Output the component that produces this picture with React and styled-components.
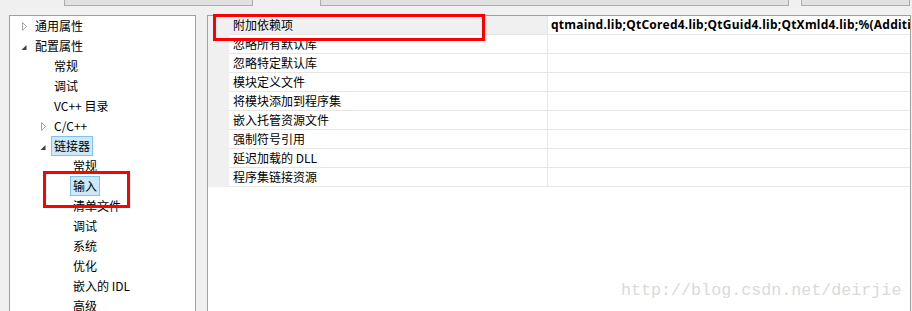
import React from 'react'
import styled, { createGlobalStyle } from 'styled-components'

const GlobalStyle = createGlobalStyle`
html, body {
    margin: 0;
    padding: 0;
    background: #f0f0f0;
    overflow: hidden;
}
body {
    font-family: "Noto Sans CJK SC", "Noto Sans", sans-serif;
    font-size: 12px;
    color: #000;
}
`

const Page = styled.div`
position: relative;
width: 912px;
height: 311px;
overflow: hidden;
background: #f0f0f0;
`

const Strip = styled.div`
display: flex;
height: 6px;
padding-left: 64px;
`

const StripButton = styled.div`
box-sizing: border-box;
width: ${p => p.$width}px;
margin-left: ${p => p.$gap || 0}px;
height: 6px;
background: #e1e1e1;
border: 1px solid #adadad;
border-top: none;
`

const Panels = styled.div`
display: flex;
gap: 11px;
margin-top: 9px;
padding-left: 9px;
`

const TreePanel = styled.div`
box-sizing: border-box;
width: 187px;
height: 320px;
background: #fff;
border: 1px solid #a0a0a0;
`

const TreeRow = styled.div`
display: flex;
align-items: center;
height: 20px;
padding-left: ${p => 9 + p.$level * 19}px;
white-space: nowrap;
`

const Expander = styled.span`
display: flex;
width: 10px;
height: 20px;
margin-right: 3px;
`

const TreeLabel = styled.span`
box-sizing: border-box;
height: 20px;
line-height: 18px;
padding: 0 2px;
border: 1px solid ${p => p.$sel ? '#7ec4ef' : 'transparent'};
background: ${p => p.$sel ? '#cde8f8' : 'transparent'};
`

const GridPanel = styled.div`
box-sizing: border-box;
width: 704px;
height: 320px;
background: #fff;
border: 1px solid #a0a0a0;
overflow: hidden;
`

const GridRow = styled.div`
display: grid;
grid-template-columns: 21px 319px 1fr;
height: 19px;
`

const Gutter = styled.div`
background: #f0f0f0;
`

const NameCell = styled.div`
box-sizing: border-box;
padding-left: 4px;
line-height: 18px;
border-right: 1px solid #e6e6e6;
border-bottom: 1px solid #e6e6e6;
background: ${p => p.$sel ? '#f0f0f0' : '#fff'};
white-space: nowrap;
`

const ValueCell = styled.div`
box-sizing: border-box;
padding-left: 3px;
line-height: 18px;
border-bottom: 1px solid #e6e6e6;
font-family: "Noto Sans", sans-serif;
font-weight: 700;
letter-spacing: 0.25px;
white-space: nowrap;
overflow: hidden;
`

const Mark = styled.div`
position: absolute;
box-sizing: border-box;
left: ${p => p.$x}px;
top: ${p => p.$y}px;
width: ${p => p.$w}px;
height: ${p => p.$h}px;
border: 3px solid #ff0000;
pointer-events: none;
`

const Watermark = styled.div`
position: absolute;
left: 621px;
top: 281px;
font-family: "Liberation Mono", monospace;
font-size: 16.7px;
color: #dadada;
white-space: nowrap;
`

const Collapsed = () => (
    <svg width="10" height="20" viewBox="0 0 10 20">
        <polygon points="3.5,6.5 7.5,10.5 3.5,14.5" fill="none" stroke="#a6a6a6" strokeWidth="1" />
    </svg>
)

const Expanded = () => (
    <svg width="10" height="20" viewBox="0 0 10 20">
        <polygon points="7.5,9 7.5,14 2.5,14" fill="#404040" />
    </svg>
)

const tree = [
    { text: '通用属性', level: 0, icon: 'closed' },
    { text: '配置属性', level: 0, icon: 'open' },
    { text: '常规', level: 1 },
    { text: '调试', level: 1 },
    { text: 'VC++ 目录', level: 1 },
    { text: 'C/C++', level: 1, icon: 'closed' },
    { text: '链接器', level: 1, icon: 'open', sel: true },
    { text: '常规', level: 2 },
    { text: '输入', level: 2, sel: true },
    { text: '清单文件', level: 2 },
    { text: '调试', level: 2 },
    { text: '系统', level: 2 },
    { text: '优化', level: 2 },
    { text: '嵌入的 IDL', level: 2 },
    { text: '高级', level: 2 },
]

const props = [
    { name: '附加依赖项', value: 'qtmaind.lib;QtCored4.lib;QtGuid4.lib;QtXmld4.lib;%(AdditionalDependencies)', sel: true },
    { name: '忽略所有默认库' },
    { name: '忽略特定默认库' },
    { name: '模块定义文件' },
    { name: '将模块添加到程序集' },
    { name: '嵌入托管资源文件' },
    { name: '强制符号引用' },
    { name: '延迟加载的 DLL' },
    { name: '程序集链接资源' },
]

const App = () => {
    return (
        <Page>
            <GlobalStyle />
            <Strip>
                <StripButton $width={189} />
                <StripButton $width={469} $gap={67} />
                <StripButton $width={109} $gap={12} />
            </Strip>
            <Panels>
                <TreePanel>
                    {tree.map((item, i) => (
                        <TreeRow key={i} $level={item.level}>
                            <Expander>
                                {item.icon === 'closed' && <Collapsed />}
                                {item.icon === 'open' && <Expanded />}
                            </Expander>
                            <TreeLabel $sel={item.sel}>{item.text}</TreeLabel>
                        </TreeRow>
                    ))}
                </TreePanel>
                <GridPanel>
                    {props.map((p, i) => (
                        <GridRow key={i}>
                            <Gutter />
                            <NameCell $sel={p.sel}>{p.name}</NameCell>
                            <ValueCell>{p.value || ''}</ValueCell>
                        </GridRow>
                    ))}
                </GridPanel>
            </Panels>
            <Mark $x={213} $y={14} $w={272} $h={27} />
            <Mark $x={43} $y={171} $w={87} $h={37} />
            <Watermark>http://blog.csdn.net/deirjie</Watermark>
        </Page>
    )
}

export default App
